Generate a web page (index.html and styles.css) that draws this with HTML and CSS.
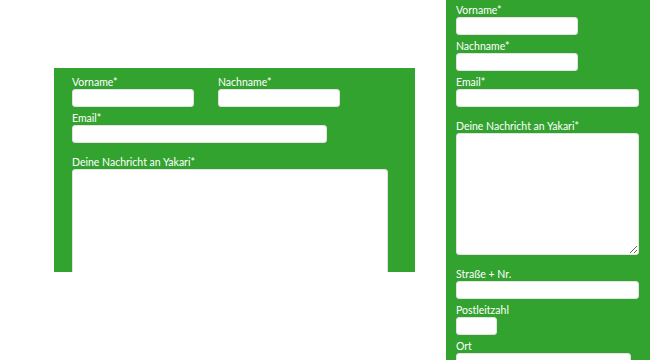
FILE: index.html
```html
<!DOCTYPE html>
<html lang="de">
<head>
    <meta charset="UTF-8">
    <meta name="viewport" content="width=device-width, initial-scale=1.0">
    <title>Kontakt Yakari</title>
    <link rel="stylesheet" href="styles.css">
</head>
<body>
    <div class="panel panel-wide">
        <form class="form">
            <div class="row">
                <div class="field">
                    <label>Vorname*</label>
                    <input type="text" class="in-name">
                </div>
                <div class="field">
                    <label>Nachname*</label>
                    <input type="text" class="in-name">
                </div>
            </div>
            <div class="field">
                <label>Email*</label>
                <input type="email" class="in-email">
            </div>
            <div class="field field-msg">
                <label>Deine Nachricht an Yakari*</label>
                <textarea class="in-msg"></textarea>
            </div>
        </form>
    </div>

    <div class="panel panel-narrow">
        <form class="form">
            <div class="field">
                <label>Vorname*</label>
                <input type="text" class="in-name">
            </div>
            <div class="field">
                <label>Nachname*</label>
                <input type="text" class="in-name">
            </div>
            <div class="field">
                <label>Email*</label>
                <input type="email" class="in-full">
            </div>
            <div class="field field-msg">
                <label>Deine Nachricht an Yakari*</label>
                <textarea class="in-full in-msg"></textarea>
            </div>
            <div class="field field-msg">
                <label>Straße + Nr.</label>
                <input type="text" class="in-full">
            </div>
            <div class="field">
                <label>Postleitzahl</label>
                <input type="text" class="in-zip">
            </div>
            <div class="field">
                <label>Ort</label>
                <input type="text" class="in-city">
            </div>
        </form>
    </div>
</body>
</html>
```

FILE: styles.css
```css
body {
    font-family: Lato, "Open Sans", sans-serif;
    margin: 0;
    height: 100vh;
    overflow: hidden;
    background: #fff;
    display: flex;
    align-items: flex-start;
}
.panel {
    background: #33a32f;
    overflow: hidden;
    box-sizing: border-box;
}
.panel-wide {
    width: 361px;
    height: 204px;
    margin: 68px 31px 0 54px;
    padding: 3px 0 0 18px;
}
.panel-narrow {
    width: 204px;
    height: 420px;
    margin-top: -1px;
    padding: 0 0 0 10px;
}
.form {
    display: flex;
    flex-direction: column;
}
.row {
    display: flex;
    gap: 24px;
}
.field {
    display: flex;
    flex-direction: column;
    align-items: flex-start;
}
.field-msg {
    margin-top: 8px;
}
label {
    color: #fff;
    font-size: 10.5px;
    line-height: 14px;
    height: 18px;
    padding-top: 4px;
    box-sizing: border-box;
    overflow: visible;
}
input, textarea {
    box-sizing: border-box;
    height: 18px;
    border: 1px solid #e2e2e2;
    border-radius: 3px;
    background: #fff;
    margin: 0;
    padding: 0 4px;
    font-family: inherit;
}
.in-name {
    width: 122px;
}
.in-email {
    width: 255px;
}
.in-full {
    width: 183px;
}
.in-zip {
    width: 41px;
}
.in-city {
    width: 175px;
}
.in-msg {
    height: 122px;
}
.panel-wide .in-msg {
    width: 316px;
    height: 160px;
}
```
